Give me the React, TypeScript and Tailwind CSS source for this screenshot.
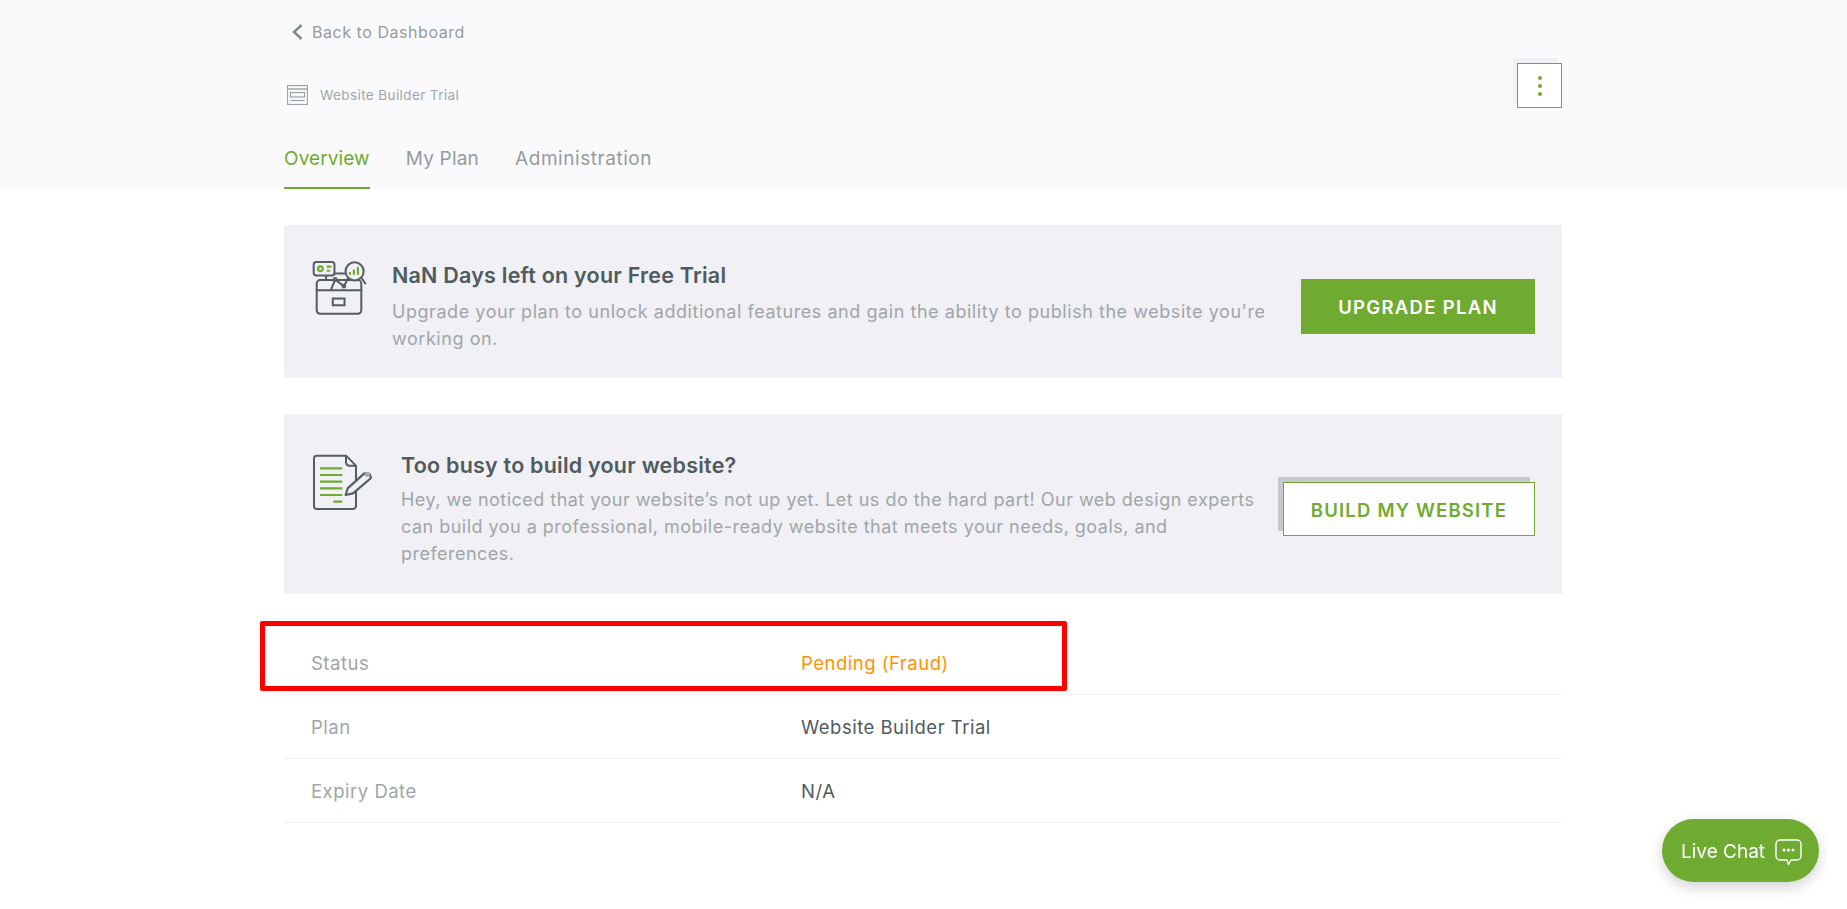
const font = "font-['Inter','Liberation_Sans',sans-serif]";

function BoxChartIcon() {
  return (
    <svg width="57" height="57" viewBox="60 60 170 170" fill="none" strokeLinecap="round" strokeLinejoin="round">
      <g stroke="#535e61" strokeWidth="6">
        <path d="M105 120v-12a8 8 0 0 1 8-8h62a8 8 0 0 1 8 8v12" />
        <rect x="77" y="120" width="133" height="100" rx="10" />
        <path d="M77 150h133" />
        <rect x="125" y="175" width="35" height="20" strokeLinejoin="miter" />
        <path d="M120 148l12-30 26 20 20-36" />
        <circle cx="132" cy="118" r="4" fill="#f0f0f5" />
        <circle cx="158" cy="138" r="4" fill="#f0f0f5" />
        <rect x="68" y="66" width="62" height="40" rx="8" fill="#f0f0f5" />
        <circle cx="190" cy="94" r="27" fill="#f0f0f5" />
        <path d="M210 113l12 17" />
      </g>
      <g stroke="#6fab31" strokeWidth="6.500">
        <circle cx="88" cy="86" r="7" />
        <path d="M107 80h14M107 92h10M176 96v8M188 88v16M200 80v24" strokeLinecap="butt" />
      </g>
    </svg>
  );
}

function DocPenIcon() {
  return (
    <svg width="60" height="57" viewBox="66 40 180 171" fill="none" strokeLinejoin="round">
      <path
        d="M80 45h88l30 30v120a10 10 0 0 1-10 10H80a8 8 0 0 1-8-8V53a8 8 0 0 1 8-8zM168 45v20a10 10 0 0 0 10 10h20"
        stroke="#535e61"
        strokeWidth="6"
      />
      <path d="M90 83h67M90 103h67M90 123h67M90 143h67M90 163h67M130 183h27" stroke="#6fab31" strokeWidth="6.500" />
      <path
        d="M167 163l6-20 50-45 16 2 4 12-54 46z"
        fill="#f0f0f5"
        stroke="#535e61"
        strokeWidth="6.500"
      />
      <circle cx="232" cy="101" r="8" fill="#a4aaac" />
    </svg>
  );
}

function PlanIcon() {
  return (
    <svg width="21" height="20" viewBox="0 0 21 20" fill="none" stroke="#9aa1a3">
      <rect x="0.5" y="0.5" width="20" height="19" strokeWidth="1.2" />
      <path d="M0.5 4h20" strokeWidth="1.4" />
      <rect x="3.5" y="7.5" width="14" height="4.5" strokeWidth="1.2" />
      <path d="M3.5 15.5h14" strokeWidth="1.2" />
    </svg>
  );
}

function ChatIcon() {
  return (
    <svg width="27" height="27" viewBox="0 0 27 27" fill="none" stroke="#fff" strokeWidth="1.4" strokeLinejoin="round">
      <path d="M5 1h17a4 4 0 0 1 4 4v12a4 4 0 0 1-4 4h-6l-2.500 4.500L12 21H5a4 4 0 0 1-4-4V5a4 4 0 0 1 4-4z" />
      <circle cx="9" cy="11" r="0.8" fill="#fff" />
      <circle cx="13.500" cy="11" r="0.8" fill="#fff" />
      <circle cx="18" cy="11" r="0.8" fill="#fff" />
    </svg>
  );
}

const rows = [
  { label: "Status", value: "Pending (Fraud)", color: "text-[#ff9100]" },
  { label: "Plan", value: "Website Builder Trial", color: "text-[#4f5b5e]" },
  { label: "Expiry Date", value: "N/A", color: "text-[#4f5b5e]" },
];

export default function App() {
  return (
    <div className={`min-h-[909px] bg-white ${font}`}>
      <div className="h-[189px] bg-[#fafafc]">
        <div className="ml-[284px] flex h-full w-[1279px] flex-col">
          <a className="mt-[23px] ml-[8px] flex h-[18px] items-center text-[16px] tracking-[0.55px] text-[#949c9e]">
            <svg width="11" height="16" viewBox="0 0 11 16" fill="none" stroke="#7f888a" strokeWidth="2.400">
              <path d="M9.500 1L2 8l7.500 7" />
            </svg>
            <span className="ml-[9px]">Back to Dashboard</span>
          </a>
          <div className="flex items-start justify-between">
            <div className="mt-[44px] ml-[3px] flex h-[20px] items-center gap-[12px] text-[13.500px] tracking-[0.4px] text-[#a0a6a8]">
              <PlanIcon />
              <span>Website Builder Trial</span>
            </div>
            <button className="mt-[22px] mr-[1px] flex h-[45px] w-[45px] flex-col items-center justify-center gap-[4px] border border-[#6fab31] bg-white shadow-[-4px_-5px_0_#f0f0f5]">
              <span className="h-[4px] w-[4px] rounded-full bg-[#6fab31]" />
              <span className="h-[4px] w-[4px] rounded-full bg-[#6fab31]" />
              <span className="h-[4px] w-[4px] rounded-full bg-[#6fab31]" />
            </button>
          </div>
          <nav className="mt-auto flex gap-[36px] text-[19px] tracking-[0.2px] text-[#949c9e]">
            <span className="border-b-2 border-[#6fab31] pb-[16px] leading-[24px] tracking-[0.1px] text-[#6fab31]">Overview</span>
            <span className="pb-[18px] leading-[24px]">My Plan</span>
            <span className="pb-[18px] leading-[24px] tracking-[0.55px]">Administration</span>
          </nav>
        </div>
      </div>

      <div className="ml-[284px] w-[1278px] pt-[36px]">
        <section className="flex h-[153px] items-center bg-[#f0f0f5] pt-[9px] pr-[27px] pl-[27px]">
          <div className="mb-[35px] w-[81px] shrink-0">
            <BoxChartIcon />
          </div>
          <div className="w-[885px]">
            <h2 className="text-[21.500px] leading-[28px] font-semibold tracking-[0.22px] text-[#4f5b5e]">NaN Days left on your Free Trial</h2>
            <p className="mt-[9px] text-[18px] leading-[27px] tracking-[0.55px] text-[#a0a6a8]">
              Upgrade your plan to unlock additional features and gain the ability to publish the website you're working on.
            </p>
          </div>
          <button className="ml-auto h-[55px] w-[234px] bg-[#6fab31] pt-[3px] text-[18.500px] font-semibold tracking-[1.3px] text-white">
            UPGRADE PLAN
          </button>
        </section>

        <section className="mt-[36px] flex h-[180px] items-center bg-[#f0f0f5] pt-[9px] pr-[27px] pl-[27px]">
          <div className="mb-[52px] ml-[1px] w-[89px] shrink-0">
            <DocPenIcon />
          </div>
          <div className="w-[860px]">
            <h2 className="text-[21.500px] leading-[28px] font-semibold tracking-[0.22px] text-[#4f5b5e]">Too busy to build your website?</h2>
            <p className="mt-[7px] text-[18px] leading-[27px] tracking-[0.48px] text-[#a0a6a8]">
              Hey, we noticed that your website’s not up yet. Let us do the hard part! Our web design experts can build you a professional, mobile-ready website that meets your needs, goals, and preferences.
            </p>
          </div>
          <button className="ml-auto h-[54px] w-[252px] border border-[#6fab31] bg-white pt-[5px] text-[18.500px] font-semibold tracking-[1.2px] text-[#6fab31] shadow-[-5px_-5px_0_#c5cacd]">
            BUILD MY WEBSITE
          </button>
        </section>

        <div className="relative mt-[37px]">
          {rows.map((r) => (
            <div key={r.label} className="flex h-[64px] items-center border-b border-[#f0f0f2] pt-[2px] pl-[27px] text-[18.500px] tracking-[0.5px]">
              <span className="w-[490px] text-[#a0a6a8]">{r.label}</span>
              <span className={r.color}>{r.value}</span>
            </div>
          ))}
          <div className="pointer-events-none absolute top-[-10px] left-[-24px] h-[70px] w-[807px] rounded-[2px] border-[5px] border-[#ff0000]" />
        </div>
      </div>

      <button className="fixed right-[28px] bottom-[27px] flex h-[63px] w-[157px] items-center rounded-full bg-[#6fab31] pt-[3px] pl-[19px] text-[19px] text-white shadow-[0_5px_14px_rgba(0,0,0,0.18)]">
        <span>Live Chat</span>
        <span className="ml-[10px]">
          <ChatIcon />
        </span>
      </button>
    </div>
  );
}
